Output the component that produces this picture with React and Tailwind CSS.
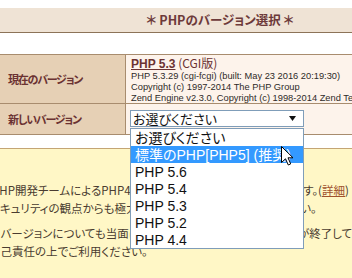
export default function App() {
  const jp = "font-['Noto_Sans_CJK_JP',sans-serif] [font-feature-settings:'palt']"
  const options = ['お選びください', '標準のPHP[PHP5] (推奨)', 'PHP 5.6', 'PHP 5.4', 'PHP 5.3', 'PHP 5.2', 'PHP 4.4']

  return (
    <div className="relative w-[352px] h-[278px] overflow-hidden bg-white">
      <div className="w-[520px] pt-2">
        {/* title bar */}
        <div className="w-[440px] h-[25px] bg-[#efe3d5] border-b border-[#8c7358] flex items-center justify-center">
          <h1 className={`${jp} text-[12.5px] font-bold text-[#6d3a3a] leading-none`}>＊ PHPのバージョン選択 ＊</h1>
        </div>

        {/* version table */}
        <div className="mt-[21px] border-t border-[#a88c6e]">
          <div className="flex h-[49px] border-b border-[#a88c6e]">
            <div className="w-[126px] shrink-0 bg-[#e6d0b5] border-r border-[#a88c6e] flex items-center pl-2">
              <span className={`${jp} text-[11px] tracking-[-1.2px] font-bold text-[#6b3232]`}>現在のバージョン</span>
            </div>
            <div className="flex-1 bg-[#fdf3eb] pl-[5px] pt-px">
              <p className={`${jp} text-[12px] leading-[13px] text-[#6b3232]`}>
                <a className="font-bold underline font-['Liberation_Sans',sans-serif]">PHP 5.3</a> (CGI版)
              </p>
              <div className="font-['Liberation_Sans',sans-serif] text-[9.3px] leading-[11px] text-[#2e2a28] whitespace-nowrap">
                <p>PHP 5.3.29 (cgi-fcgi) (built: May 23 2016 20:19:30)</p>
                <p>Copyright (c) 1997-2014 The PHP Group</p>
                <p>Zend Engine v2.3.0, Copyright (c) 1998-2014 Zend Technologies</p>
              </div>
            </div>
          </div>
          <div className="flex h-[31px] border-b border-[#a88c6e]">
            <div className="w-[126px] shrink-0 bg-[#e6d0b5] border-r border-[#a88c6e] flex items-center pl-2">
              <span className={`${jp} text-[11px] tracking-[-1.2px] font-bold text-[#6b3232]`}>新しいバージョン</span>
            </div>
            <div className="flex-1 bg-[#fdf3eb] pl-[4px] pt-[6px]">
              <div className="relative w-[174px]">
                <div className="h-[17px] bg-white border border-[#7f9db9] flex items-center justify-between pl-[2px] pr-[7px]">
                  <span className={`${jp} text-[13px] leading-none text-[#111]`}>お選びください</span>
                  <svg width="7" height="5" viewBox="0 0 7 5"><path d="M0 0H7L3.5 5Z" fill="#111" /></svg>
                </div>
                {/* opened list */}
                <ul className="absolute left-0 top-[18px] z-10 w-[174px] bg-white border border-[#7f9db9] overflow-hidden">
                  {options.map((o, i) => (
                    <li
                      key={o}
                      className={`h-[17px] flex items-center pl-[4px] whitespace-nowrap font-['Liberation_Sans','Noto_Sans_CJK_JP',sans-serif] [font-feature-settings:'palt'] text-[14px] leading-none ${i === 1 ? 'bg-[#3399ff] text-white' : 'text-[#111]'}`}
                    >
                      {o}
                    </li>
                  ))}
                </ul>
              </div>
            </div>
          </div>
        </div>

        {/* notice */}
        <div className={`${jp} mt-[13px] bg-[#fff7c6] border-t border-[#c4a574] pt-[33px] h-[140px] text-[11.5px] leading-[17.5px] text-[#4a3c30] whitespace-nowrap`}>
          <p className="-ml-[8px]">PHP開発チームによるPHP4、5.2、5.3のサポートは終了しています。(<a className="underline text-[#a0522d]">詳細</a>)</p>
          <p className="-ml-[11px]">セキュリティの観点からも極力弊社推奨のPHP 5をご利用ください。</p>
          <p className="-ml-[11px] mt-[8px]">旧バージョンについても当面はご利用いただけますが、サポートが終了していますので</p>
          <p className="-ml-[11px]">自己責任の上でご利用ください。</p>
        </div>
      </div>

      {/* mouse pointer */}
      <svg className="absolute left-[281px] top-[146px] z-20" width="13" height="20" viewBox="0 0 13 20">
        <path d="M0.5 0.5V16.5L4.5 12.8L7.3 19L9.7 17.9L7 11.8H12Z" fill="#fff" stroke="#000" strokeWidth="1" strokeLinejoin="round" />
      </svg>
    </div>
  )
}
